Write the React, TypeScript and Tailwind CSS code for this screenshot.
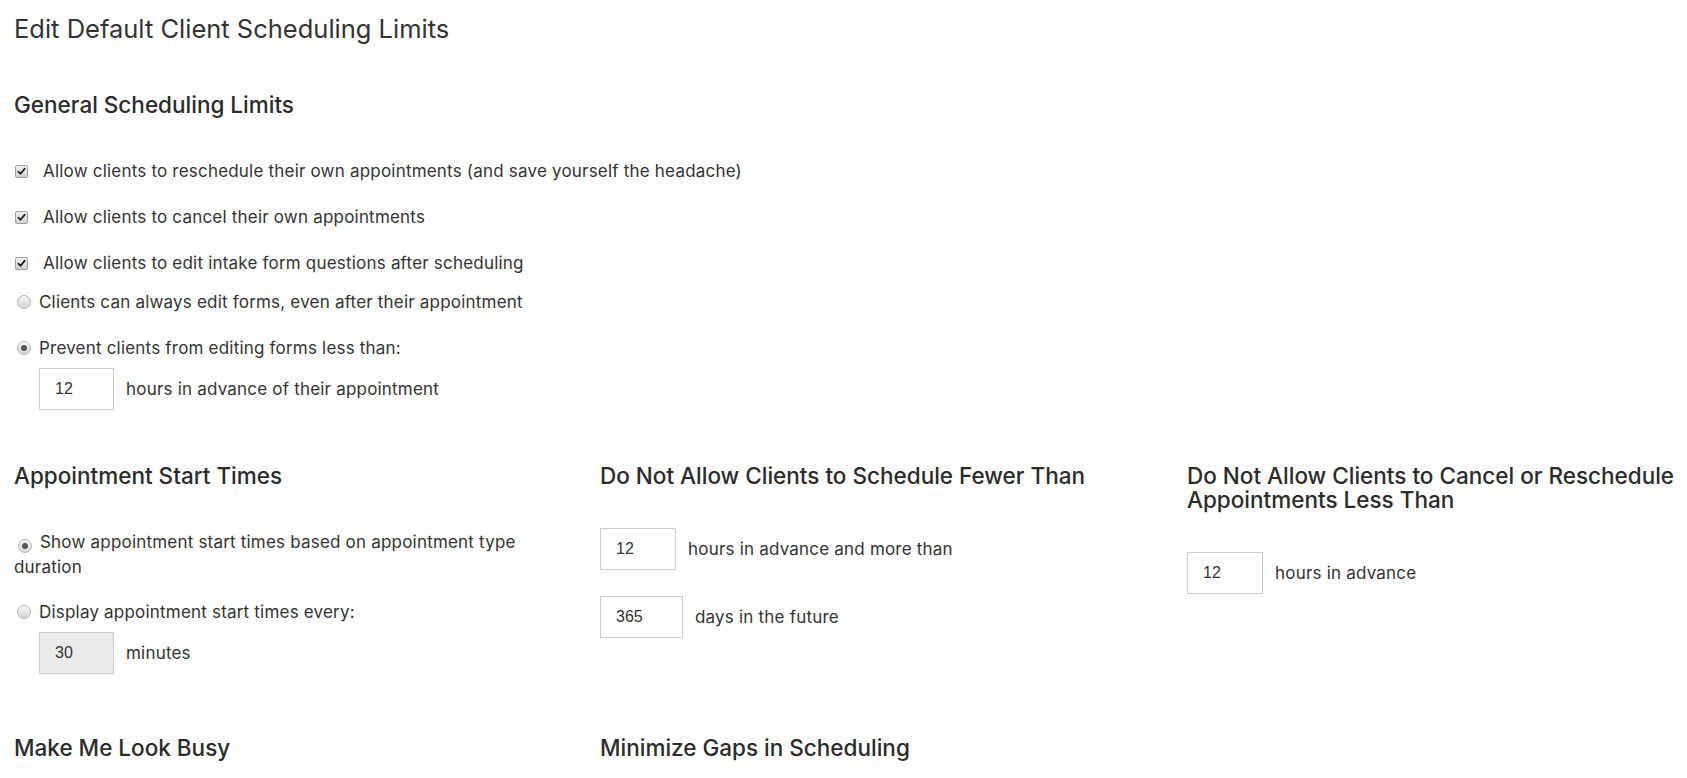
import React from 'react';

const Check: React.FC = () => (
  <span className="inline-flex items-center justify-center w-[13px] h-[13px] rounded-[2px] border border-[#a0a0a0] bg-gradient-to-b from-[#f2f2f2] to-[#d0d0d0] shrink-0">
    <svg viewBox="0 0 10 10" className="w-[9px] h-[9px]">
      <path d="M1.5 5.2 L4 7.6 L8.6 1.8" fill="none" stroke="#222" strokeWidth="1.9" strokeLinecap="round" strokeLinejoin="round" />
    </svg>
  </span>
);

const Radio: React.FC<{ checked?: boolean; className?: string }> = ({ checked, className = '' }) => (
  <span className={`inline-flex items-center justify-center w-[14px] h-[14px] rounded-full border border-[#b5b5b5] bg-gradient-to-b from-[#f7f7f7] to-[#d6d6d6] align-[-1px] shrink-0 ${className}`}>
    {checked && <span className="w-[6px] h-[6px] rounded-full bg-[#555]" />}
  </span>
);

const NumBox: React.FC<{ value: string; width?: string; disabled?: boolean }> = ({ value, width = 'w-[75px]', disabled }) => (
  <div
    className={`${width} h-[42px] border border-[#cccccc] flex items-center pl-[15px] text-[16px] tracking-normal text-[#333] font-['Liberation_Sans',Arial,sans-serif] ${
      disabled ? 'bg-[#ebebeb]' : 'bg-white'
    }`}
  >
    {value}
  </div>
);

const InputRow: React.FC<{ value: string; label: string; width?: string; disabled?: boolean }> = ({ value, label, width, disabled }) => (
  <div className="flex items-center gap-[12px]">
    <NumBox value={value} width={width} disabled={disabled} />
    <span>{label}</span>
  </div>
);

const SectionTitle: React.FC<{ children: React.ReactNode }> = ({ children }) => (
  <h3 className="text-[22.5px] leading-[24px] font-medium text-[#2b2b2b] tracking-normal">{children}</h3>
);

const checks = [
  'Allow clients to reschedule their own appointments (and save yourself the headache)',
  'Allow clients to cancel their own appointments',
  'Allow clients to edit intake form questions after scheduling',
];

export default function App() {
  return (
    <div className="min-h-screen bg-white text-[#333] font-['Inter','Noto_Sans',sans-serif] text-[17px] leading-[24px] tracking-[0.2px] pl-[14px] pt-[13px] overflow-hidden">
      <h1 className="text-[25.5px] leading-[32px] font-normal text-[#333] tracking-normal">Edit Default Client Scheduling Limits</h1>

      <h2 className="mt-[46px] text-[22.5px] leading-[28px] font-medium text-[#2b2b2b] tracking-normal">General Scheduling Limits</h2>

      <div className="mt-[40px] flex flex-col gap-[22px]">
        {checks.map(c => (
          <label key={c} className="flex items-center">
            <span className="w-[29px] flex pl-[1px]">
              <Check />
            </span>
            <span>{c}</span>
          </label>
        ))}
      </div>

      <div className="mt-[15px] flex items-center gap-[8px] pl-[3px] h-[24px]">
        <Radio />
        <span>Clients can always edit forms, even after their appointment</span>
      </div>
      <div className="mt-[22px] flex items-center gap-[8px] pl-[3px] h-[24px]">
        <Radio checked />
        <span>Prevent clients from editing forms less than:</span>
      </div>
      <div className="mt-[8px] pl-[25px]">
        <InputRow value="12" label="hours in advance of their appointment" />
      </div>

      <div className="mt-[54px] grid grid-cols-[586px_587px_500px]">
        <div className="pr-[30px]">
          <SectionTitle>Appointment Start Times</SectionTitle>
          <p className="mt-[42px] leading-[25px]">
            <Radio checked className="ml-[4px]" /> <span className="ml-[3px]">Show appointment start times based on appointment type duration</span>
          </p>
          <div className="mt-[20px] flex items-center gap-[8px] pl-[3px] h-[24px]">
            <Radio />
            <span>Display appointment start times every:</span>
          </div>
          <div className="mt-[8px] pl-[25px]">
            <InputRow value="30" label="minutes" disabled />
          </div>
        </div>

        <div className="pr-[30px]">
          <SectionTitle>Do Not Allow Clients to Schedule Fewer Than</SectionTitle>
          <div className="mt-[40px] flex flex-col gap-[26px]">
            <InputRow value="12" label="hours in advance and more than" width="w-[76px]" />
            <InputRow value="365" label="days in the future" width="w-[83px]" />
          </div>
        </div>

        <div>
          <SectionTitle>Do Not Allow Clients to Cancel or Reschedule Appointments Less Than</SectionTitle>
          <div className="mt-[40px]">
            <InputRow value="12" label="hours in advance" width="w-[76px]" />
          </div>
        </div>
      </div>

      <div className="mt-[62px] grid grid-cols-[586px_587px_500px]">
        <SectionTitle>Make Me Look Busy</SectionTitle>
        <SectionTitle>Minimize Gaps in Scheduling</SectionTitle>
        <div />
      </div>
    </div>
  );
}
